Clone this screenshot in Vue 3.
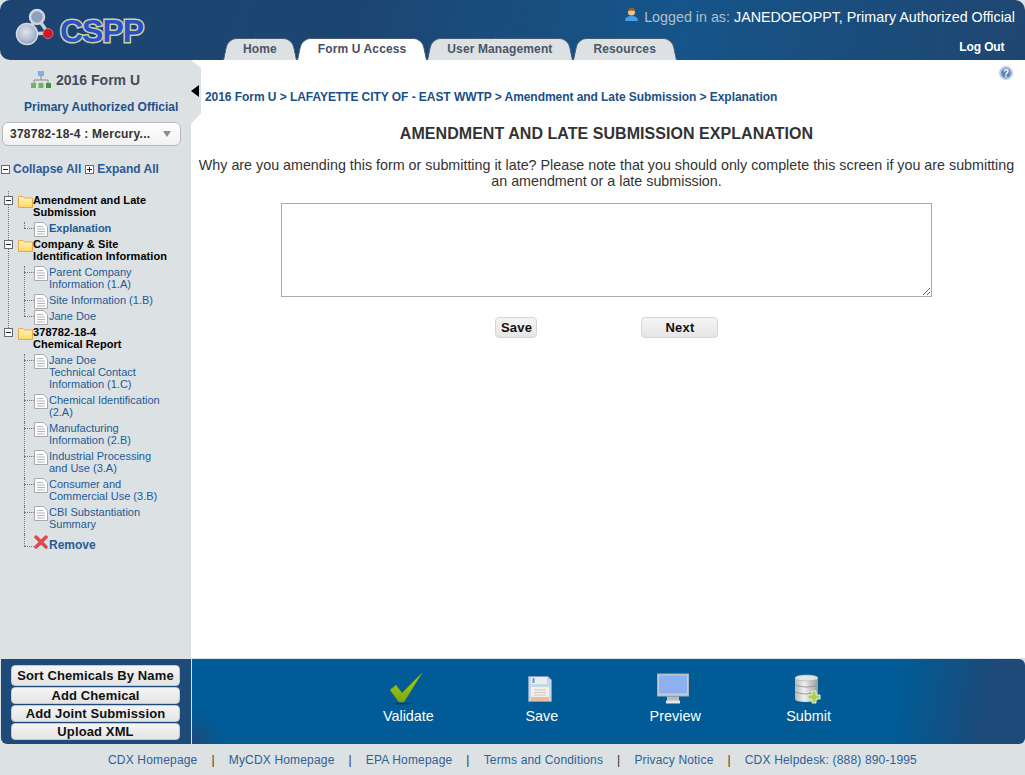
<script setup>
const groups = [
  { title: ['Amendment and Late', 'Submission'], items: [{ lines: ['Explanation'], active: true }] },
  { title: ['Company & Site', 'Identification Information'], items: [
    { lines: ['Parent Company', 'Information (1.A)'] },
    { lines: ['Site Information (1.B)'] },
    { lines: ['Jane Doe'] },
  ] },
  { title: ['378782-18-4', 'Chemical Report'], items: [
    { lines: ['Jane Doe', 'Technical Contact', 'Information (1.C)'] },
    { lines: ['Chemical Identification', '(2.A)'] },
    { lines: ['Manufacturing', 'Information (2.B)'] },
    { lines: ['Industrial Processing', 'and Use (3.A)'] },
    { lines: ['Consumer and', 'Commercial Use (3.B)'] },
    { lines: ['CBI Substantiation', 'Summary'] },
  ] },
]
const tabs = [
  { label: 'Home' },
  { label: 'Form U Access', active: true },
  { label: 'User Management' },
  { label: 'Resources' },
]
const sideButtons = ['Sort Chemicals By Name', 'Add Chemical', 'Add Joint Submission', 'Upload XML']
const footerLinks = ['CDX Homepage', 'MyCDX Homepage', 'EPA Homepage', 'Terms and Conditions', 'Privacy Notice', 'CDX Helpdesk: (888) 890-1995']
</script>

<template>
  <div class="page">
    <header class="header">
      <div class="logo">
        <svg class="mol" width="46" height="44" viewBox="0 0 46 44">
          <defs>
            <radialGradient id="ball" cx="45%" cy="40%" r="65%">
              <stop offset="0" stop-color="#dfe5ee" />
              <stop offset="0.65" stop-color="#aebad2" />
              <stop offset="1" stop-color="#8494b5" />
            </radialGradient>
          </defs>
          <path d="M12 26 L22 9 L33 25 Z" fill="none" stroke="#c8cfda" stroke-width="3.500" />
          <circle cx="22" cy="9" r="7" fill="#8fa0bf" stroke="#d0d6de" stroke-width="2.500" />
          <circle cx="12" cy="26" r="10.500" fill="url(#ball)" stroke="#d6dadf" stroke-width="1.500" />
          <circle cx="33" cy="25.500" r="5" fill="#e01020" stroke="#a89890" stroke-width="0.800" />
        </svg>
        <span class="brand">CSPP</span>
      </div>
      <div class="head-right">
        <div class="user">
          <svg width="15" height="15" viewBox="0 0 15 15">
            <path d="M1 14 Q1 9 7.500 9 Q14 9 14 14 Z" fill="#4a9ae8" />
            <circle cx="7.500" cy="5" r="3.600" fill="#f0c090" />
            <path d="M3.800 4.500 Q4 1 7.500 1 Q11 1 11.200 4.500 Q7.500 2.500 3.800 4.500 Z" fill="#a05a20" />
          </svg>
          <span class="muted">Logged in as:</span>
          <span>JANEDOEOPPT, Primary Authorized Official</span>
        </div>
        <div class="navrow">
          <nav class="tabs">
            <a v-for="t in tabs" :key="t.label" class="tab" :class="{ on: t.active }">{{ t.label }}</a>
          </nav>
          <a class="logout">Log Out</a>
        </div>
      </div>
    </header>

    <div class="middle">
      <aside class="side">
        <span class="notch"></span>
        <span class="arrow"></span>
        <div class="form-title">
          <svg width="20" height="18" viewBox="0 0 20 18">
            <rect x="7" y="0" width="6" height="5" fill="#7fb0e8" />
            <path d="M10 5V9M3 12V9H17V12" fill="none" stroke="#8a8a8a" />
            <rect x="0" y="12" width="5" height="5" fill="#6fb55a" />
            <rect x="7.500" y="12" width="5" height="5" fill="#6fb55a" />
            <rect x="15" y="12" width="5" height="5" fill="#3f9a3f" />
          </svg>
          <span>2016 Form U</span>
        </div>
        <div class="role">Primary Authorized Official</div>
        <div class="select">
          <span>378782-18-4 : Mercury...</span>
          <i class="caret"></i>
        </div>
        <div class="collapse">
          <span class="box minus"></span><a>Collapse All</a>
          <span class="box plus"></span><a>Expand All</a>
        </div>
        <div class="tree">
          <section v-for="g in groups" :key="g.title[0]" class="group">
            <div class="gtitle">
              <span class="box minus"></span>
              <svg class="folder" width="15" height="13" viewBox="0 0 15 13">
                <defs>
                  <linearGradient id="fold" x1="0" x2="0" y1="0" y2="1">
                    <stop offset="0" stop-color="#fff6c4" />
                    <stop offset="1" stop-color="#fcd860" />
                  </linearGradient>
                </defs>
                <path d="M0.500 12.500V1.500H5L6.500 3H14.500V12.500Z" fill="url(#fold)" stroke="#e8a848" />
              </svg>
              <strong><template v-for="l in g.title" :key="l">{{ l }}<br /></template></strong>
            </div>
            <ul class="items">
              <li v-for="it in g.items" :key="it.lines[0] + it.lines.length" class="item" :class="{ active: it.active }">
                <svg class="pg" width="14" height="15" viewBox="0 0 14 15">
                  <path d="M0.500 0.500H9.500L13.500 4.500V14.500H0.500Z" fill="#fff" stroke="#a9a9a9" />
                  <path d="M3 4.500H9M3 7H11M3 9.500H11M3 12H11" stroke="#b5b5b5" fill="none" />
                </svg>
                <a><template v-for="l in it.lines" :key="l">{{ l }}<br /></template></a>
              </li>
              <li v-if="g.title[0] === '378782-18-4'" class="item remove">
                <svg class="x" width="14" height="14" viewBox="0 0 14 14">
                  <path d="M2 2L12 12M12 2L2 12" stroke="#e8454a" stroke-width="3.400" stroke-linecap="round" />
                </svg>
                <a>Remove</a>
              </li>
            </ul>
          </section>
        </div>
      </aside>

      <main class="main">
        <div class="help-row">
          <svg width="14" height="14" viewBox="0 0 14 14">
            <circle cx="7" cy="7" r="6.500" fill="#a9c0dd" stroke="#c4d3e6" />
            <circle cx="7" cy="7" r="4.600" fill="#5a82b8" />
            <text x="7" y="10.500" text-anchor="middle" class="q">?</text>
          </svg>
        </div>
        <div class="crumbs">2016 Form U &gt; LAFAYETTE CITY OF - EAST WWTP &gt; Amendment and Late Submission &gt; Explanation</div>
        <h1 class="title">AMENDMENT AND LATE SUBMISSION EXPLANATION</h1>
        <p class="intro">Why are you amending this form or submitting it late? Please note that you should only complete this screen if you are submitting an amendment or a late submission.</p>
        <textarea class="area"></textarea>
        <div class="form-btns">
          <button class="btn save">Save</button>
          <button class="btn next">Next</button>
        </div>
      </main>
    </div>

    <div class="actions">
      <div class="side-btns">
        <button v-for="b in sideButtons" :key="b" class="sbtn" :class="{ first: b.startsWith('Sort') }">{{ b }}</button>
      </div>
      <div class="tools">
        <a class="tool">
          <svg class="shift-sm" width="34" height="32" viewBox="0 0 34 32">
            <defs>
              <linearGradient id="chk" x1="0" x2="0" y1="0" y2="1">
                <stop offset="0" stop-color="#a8d024" />
                <stop offset="1" stop-color="#7fa80e" />
              </linearGradient>
            </defs>
            <ellipse cx="12" cy="30.500" rx="9" ry="1" fill="#0c436e" />
            <path d="M0 17L6 12L12 20L32 0L14 29H9Z" fill="url(#chk)" stroke="#6e9a10" stroke-width="0.600" />
          </svg>
          <span>Validate</span>
        </a>
        <a class="tool">
          <svg class="shift-lg" width="24" height="26" viewBox="0 0 24 26">
            <path d="M0.500 0.500H20L23.500 4V25.500H0.500Z" fill="#c8d7e6" stroke="#7f9fc0" />
            <rect x="3" y="1" width="16" height="7" fill="#e8edf2" />
            <rect x="4.500" y="2" width="2" height="5" fill="#6d93b8" />
            <rect x="3" y="11" width="18" height="14" fill="#f6efe6" />
            <rect x="3" y="21" width="18" height="4" fill="#f0b8a0" />
            <path d="M6 14H18M6 16.500H18M6 19H18" stroke="#c8c8c8" />
          </svg>
          <span>Save</span>
        </a>
        <a class="tool">
          <svg class="shift-lg" width="32" height="31" viewBox="0 0 32 31">
            <rect x="0.500" y="0.500" width="31" height="22" fill="#c4cdd4" stroke="#aab2b8" />
            <rect x="2" y="2" width="28" height="18" fill="#8eb0ee" />
            <rect x="10" y="23" width="12" height="5" fill="#b5bcc2" />
            <rect x="9" y="27" width="14" height="3" fill="#e4e8ea" />
          </svg>
          <span>Preview</span>
        </a>
        <a class="tool">
          <svg class="shift-sm" width="27" height="30" viewBox="0 0 27 30">
            <defs>
              <linearGradient id="db" x1="0" x2="1" y1="0" y2="0">
                <stop offset="0" stop-color="#b8b8b8" />
                <stop offset="0.4" stop-color="#f0f0f0" />
                <stop offset="1" stop-color="#9a9a9a" />
              </linearGradient>
            </defs>
            <path d="M1 4 Q1 1 12.500 1 Q24 1 24 4V25 Q24 28 12.500 28 Q1 28 1 25Z" fill="url(#db)" />
            <ellipse cx="12.500" cy="4" rx="11.500" ry="3" fill="#e4e4e4" stroke="#aaa" stroke-width="0.600" />
            <path d="M1 11 Q12.500 15 24 11M1 18 Q12.500 22 24 18" fill="none" stroke="#999" />
            <path d="M18 17H22V21H26V25H22V29H18V25H14V21H18Z" fill="#a8cf58" stroke="#e6f2c8" />
          </svg>
          <span>Submit</span>
        </a>
      </div>
    </div>

    <footer class="footer">
      <template v-for="(l, i) in footerLinks" :key="l">
        <span v-if="i" class="sep">|</span>
        <a>{{ l }}</a>
      </template>
    </footer>
  </div>
</template>

<style>
html, body { margin: 0; background: #dce1e4; }
</style>

<style scoped>
.page {
  width: 1025px; height: 775px; display: flex; flex-direction: column;
  background: #dce1e4; font-family: "Liberation Sans", Arial, sans-serif; overflow: hidden;
}
.header {
  height: 60px; flex: none; display: flex; color: #fff;
  background: linear-gradient(100deg, #1d4470 0%, #1c4672 35%, #15558a 65%, #1f4670 100%);
  border-radius: 10px 10px 0 10px;
}
.logo { width: 222px; flex: none; display: flex; align-items: flex-start; padding: 8px 0 0 15px; box-sizing: border-box; }
.mol { flex: none; }
.brand {
  margin: 5px 0 0 -1px; font-size: 32px; font-weight: 700; line-height: 36px; color: #2a50c8; letter-spacing: -1px;
  -webkit-text-stroke: 3px #c9d2a6; paint-order: stroke fill;
}
.head-right { flex: 1; display: flex; flex-direction: column; min-width: 0; }
.user {
  height: 38px; box-sizing: border-box; padding: 9px 10px 0 0; display: flex; justify-content: flex-end; align-items: flex-start;
  font-size: 14.3px; line-height: 16px; gap: 4px;
}
.user svg { margin: -2px 1px 0 0; }
.muted { color: #b4bfca; }
.navrow { flex: 1; display: flex; justify-content: space-between; }
.tabs { display: flex; margin-left: 0.5px; }
.tab {
  position: relative; z-index: 0; padding: 0 20.5px; line-height: 22px; font-size: 12px; font-weight: 700; letter-spacing: 0.12px; color: #4a5566;
}
.tab::before, .tab::after {
  content: ""; position: absolute; top: 0; bottom: 0; z-index: -1; background: #dce1e4; border-top: 1px solid #46586a;
  transform-origin: bottom;
}
.tab::before {
  left: 0; right: 50%; border-left: 1px solid #46586a; border-radius: 9px 0 0 0; transform: skewX(-12deg);
}
.tab::after {
  right: 0; left: 50%; border-right: 1px solid #46586a; border-radius: 0 9px 0 0; transform: skewX(12deg);
}
.tab.on { color: #4a4f60; }
.tab.on::before, .tab.on::after { background: #fff; }
.logout { font-size: 12px; font-weight: 700; line-height: 18px; padding: 0 20.5px 0 0; color: #fff; letter-spacing: -0.1px; }

.middle { flex: 1; min-height: 0; display: flex; margin: 0 0 1px 1px; }
.side { position: relative; width: 190px; flex: none; background: #dce1e4; }
.notch {
  position: absolute; left: 190px; top: 0; width: 10px; height: 64px; background: #dce1e4;
  clip-path: polygon(0 0, 100% 8px, 100% 53px, 0 100%);
}
.arrow {
  position: absolute; left: 190px; top: 25px; width: 0; height: 0;
  border-style: solid; border-width: 6px 8px 6px 0; border-color: transparent #000 transparent transparent;
}
.form-title {
  display: flex; align-items: center; gap: 5px; padding: 11px 0 0 30px; height: 18px;
  font-size: 14px; font-weight: 700; line-height: 18px; color: #444c58;
}
.role { margin-top: 10px; padding-left: 23px; font-size: 12px; font-weight: 700; line-height: 16px; color: #1f5288; white-space: nowrap; }
.select {
  position: relative; margin: 7px 0 0 1px; width: 179px; height: 24px; box-sizing: border-box; padding-left: 7px;
  border: 1px solid #b5b9bc; border-radius: 6px; background: linear-gradient(#fff, #f1f1f1);
  font-size: 12px; font-weight: 700; line-height: 22px; color: #333; white-space: nowrap; letter-spacing: 0.24px;
}
.caret {
  position: absolute; right: 9px; top: 8px; width: 0; height: 0;
  border-style: solid; border-width: 6px 4px 0; border-color: #8d8d8d transparent transparent;
}
.collapse {
  margin-top: 15px; display: flex; align-items: center; font-size: 12px; font-weight: 700; line-height: 16px; color: #2c5a96; white-space: nowrap;
}
.collapse a { margin: 0 4px 0 3px; }
.box {
  position: relative; flex: none; width: 9px; height: 9px; box-sizing: border-box; border: 1px solid #6a6a6a; background: #fff;
}
.box::before { content: ""; position: absolute; left: 1px; top: 3px; width: 5px; height: 1px; background: #222; }
.plus::after { content: ""; position: absolute; left: 3px; top: 1px; width: 1px; height: 5px; background: #222; }
.tree { position: relative; margin-top: 17px; }
.tree::before { content: ""; position: absolute; left: 7px; top: -3px; height: 141px; border-left: 1px dotted #777; }
.group { position: relative; }
.gtitle {
  display: flex; align-items: flex-start; padding: 0 0 4px 3px; font-size: 11px; line-height: 12px; color: #000; position: relative;
}
.gtitle .box { margin-top: 2px; }
.folder { flex: none; margin: 1px 0 -2px 5px; }
.gtitle strong { font-weight: 700; white-space: nowrap; letter-spacing: 0.08px; }
.items { list-style: none; margin: 0; padding: 0 0 0 23px; }
.item {
  position: relative; display: flex; align-items: flex-start; padding: 0 0 4px 10px; font-size: 11px; line-height: 12px; color: #1f5a96; white-space: nowrap;
}
.item::before { content: ""; position: absolute; left: 0; top: 6px; width: 10px; border-top: 1px dotted #777; }
.item::after { content: ""; position: absolute; left: 0; top: 0; bottom: 0; border-left: 1px dotted #777; }
.item:last-child::after { bottom: auto; height: 6px; }
.pg { flex: none; margin: 0 1px -3px 0; }
.item.active { font-weight: 700; }
.remove { font-size: 12px; font-weight: 700; line-height: 16px; padding-top: 3px; color: #2c5a96; }
.remove::before { top: 12px; }
.remove:last-child::after { height: 12px; }
.x { flex: none; margin: -2px 1px 0 0; }

.main { flex: 1; min-width: 0; background: #fff; display: flex; flex-direction: column; align-items: center; padding-right: 3px; }
.help-row { align-self: stretch; height: 20px; padding: 6px 9px 0 0; display: flex; justify-content: flex-end; }
.q { font-size: 10px; font-weight: 700; fill: #fff; font-family: "Liberation Sans", sans-serif; }
.crumbs { align-self: stretch; margin: 3px 0 0 14px; font-size: 12px; font-weight: 700; line-height: 16px; color: #1c4f85; white-space: nowrap; letter-spacing: -0.055px; }
.title { margin: 20px 0 0; font-size: 16px; font-weight: 700; line-height: 18px; color: #333; text-align: center; letter-spacing: 0.05px; }
.intro { margin: 14px 0 0; font-size: 14.3px; line-height: 16px; color: #333; text-align: center; }
.area {
  display: block; margin: 14px 0 0; width: 651px; height: 94px; box-sizing: border-box; border: 1px solid #aaa; background: #fff; padding: 2px; outline: 0;
}
.form-btns { display: flex; gap: 104px; margin: 20px 0 0; }
.btn {
  height: 21px; padding: 0 0 0 1px; border: 1px solid #d6d6d6; border-radius: 4px; background: linear-gradient(#f4f4f4, #e6e6e6);
  font: 700 13px/19px "Liberation Sans", Arial, sans-serif; color: #111; letter-spacing: 0.2px;
}
.save { width: 42px; }
.next { width: 77px; }

.actions { flex: none; height: 85px; display: flex; margin: 0 0 1px 1px; gap: 1px; }
.side-btns {
  width: 190px; flex: none; box-sizing: border-box; padding: 6px 11px 0 10px; background: #1d4a78; border-radius: 0 0 0 6px;
  display: flex; flex-direction: column; gap: 1px;
}
.sbtn {
  height: 17px; padding: 0; border: 1px solid #c8c8c8; border-radius: 4px; background: linear-gradient(#f5f5f5, #e4e4e4);
  font: 700 13px/15px "Liberation Sans", Arial, sans-serif; color: #111; letter-spacing: 0.12px; white-space: nowrap;
}
.sbtn.first { height: 21px; }
.tools {
  flex: 1; display: flex; justify-content: center; padding-top: 14px;
  background: radial-gradient(circle at 0 100%, #1d4a78 0, rgba(29, 74, 120, 0) 32px), linear-gradient(100deg, #005b96 84%, #1d4a78 95%);
  border-radius: 0 6px 6px 0;
}
.tool { width: 133.4px; height: 60px; display: flex; flex-direction: column; align-items: center; color: #fff; font-size: 14.4px; line-height: 16px; }
.tool svg { height: 32px; flex: none; margin-bottom: 3px; }
.tool .shift-sm { margin-right: 2px; }
.tool .shift-lg { margin-right: 4px; }
.footer {
  height: 30px; flex: none; display: flex; justify-content: center; align-items: center; font-size: 12px; color: #2f5f94; white-space: nowrap;
  letter-spacing: 0.17px;
}
.sep { margin: 0 14px; color: #333; }
</style>
